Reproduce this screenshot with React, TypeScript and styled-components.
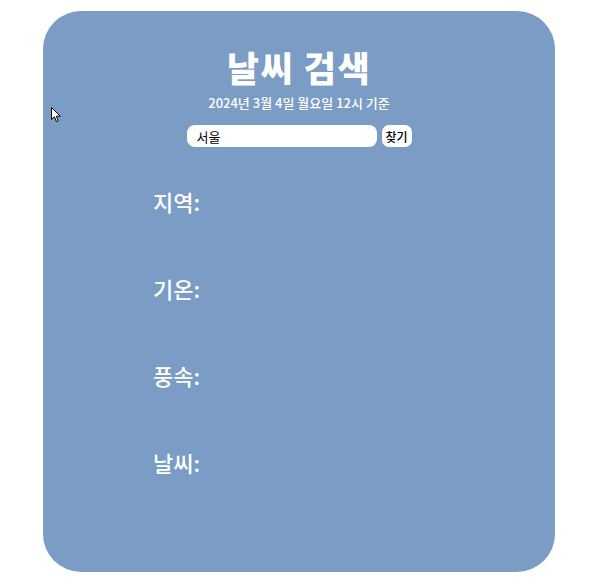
import React from "react";
import styled, { createGlobalStyle } from "styled-components";

const GlobalStyle = createGlobalStyle`
  html, body {
    margin: 0;
    padding: 0;
    background: #ffffff;
    font-family: "Noto Sans CJK KR", "Noto Sans", sans-serif;
  }
`;

const Page = styled.div`
  position: relative;
  width: 600px;
  height: 587px;
  padding-top: 11px;
  box-sizing: border-box;
`;

const Card = styled.main`
  width: 512px;
  height: 561px;
  margin-left: 43px;
  background: #7b9cc4;
  border-radius: 38px;
  display: flex;
  flex-direction: column;
  align-items: center;
  color: #ffffff;
  box-sizing: border-box;
  padding-top: 29.5px;
`;

const Title = styled.h1`
  margin: 0;
  font-size: 35px;
  font-weight: 800;
  line-height: 52px;
  letter-spacing: 1.5px;
`;

const Subtitle = styled.p`
  margin: 0;
  font-size: 13px;
  font-weight: 500;
  line-height: 19px;
`;

const SearchRow = styled.form`
  display: flex;
  gap: 5px;
  margin-top: 13.5px;
`;

const SearchInput = styled.input`
  width: 190px;
  height: 22px;
  border: none;
  border-radius: 8px;
  padding: 0 10px;
  box-sizing: border-box;
  font-family: inherit;
  font-size: 13px;
  color: #000;
  background: #fff;
  outline: none;
`;

const SearchButton = styled.button`
  height: 22px;
  width: 30px;
  border: none;
  border-radius: 7px;
  background: #fff;
  color: #000;
  font-family: inherit;
  font-size: 12px;
  font-weight: 500;
  padding: 0;
`;

const InfoList = styled.section`
  align-self: stretch;
  display: flex;
  flex-direction: column;
  gap: 63px;
  padding: 42px 0 0 110px;
`;

const InfoLabel = styled.div`
  font-size: 22px;
  font-weight: 500;
  line-height: 24px;
`;

const Cursor = styled.svg`
  position: absolute;
  left: 51px;
  top: 107px;
`;

const labels = ["지역:", "기온:", "풍속:", "날씨:"];

export default function App() {
  return (
    <Page>
      <GlobalStyle />
      <Card>
        <Title>날씨 검색</Title>
        <Subtitle>2024년 3월 4일 월요일 12시 기준</Subtitle>
        <SearchRow onSubmit={(e) => e.preventDefault()}>
          <SearchInput defaultValue="서울" />
          <SearchButton type="submit">찾기</SearchButton>
        </SearchRow>
        <InfoList>
          {labels.map((l) => (
            <InfoLabel key={l}>{l}</InfoLabel>
          ))}
        </InfoList>
      </Card>
      <Cursor width="11" height="16" viewBox="0 0 11 16">
        <path d="M0.5 0.5 L0.5 12.5 L3.4 9.8 L5.4 14.6 L7.2 13.8 L5.3 9.2 L9.3 9.2 Z" fill="#fff" stroke="#000" strokeWidth="1" strokeLinejoin="round" />
      </Cursor>
    </Page>
  );
}
